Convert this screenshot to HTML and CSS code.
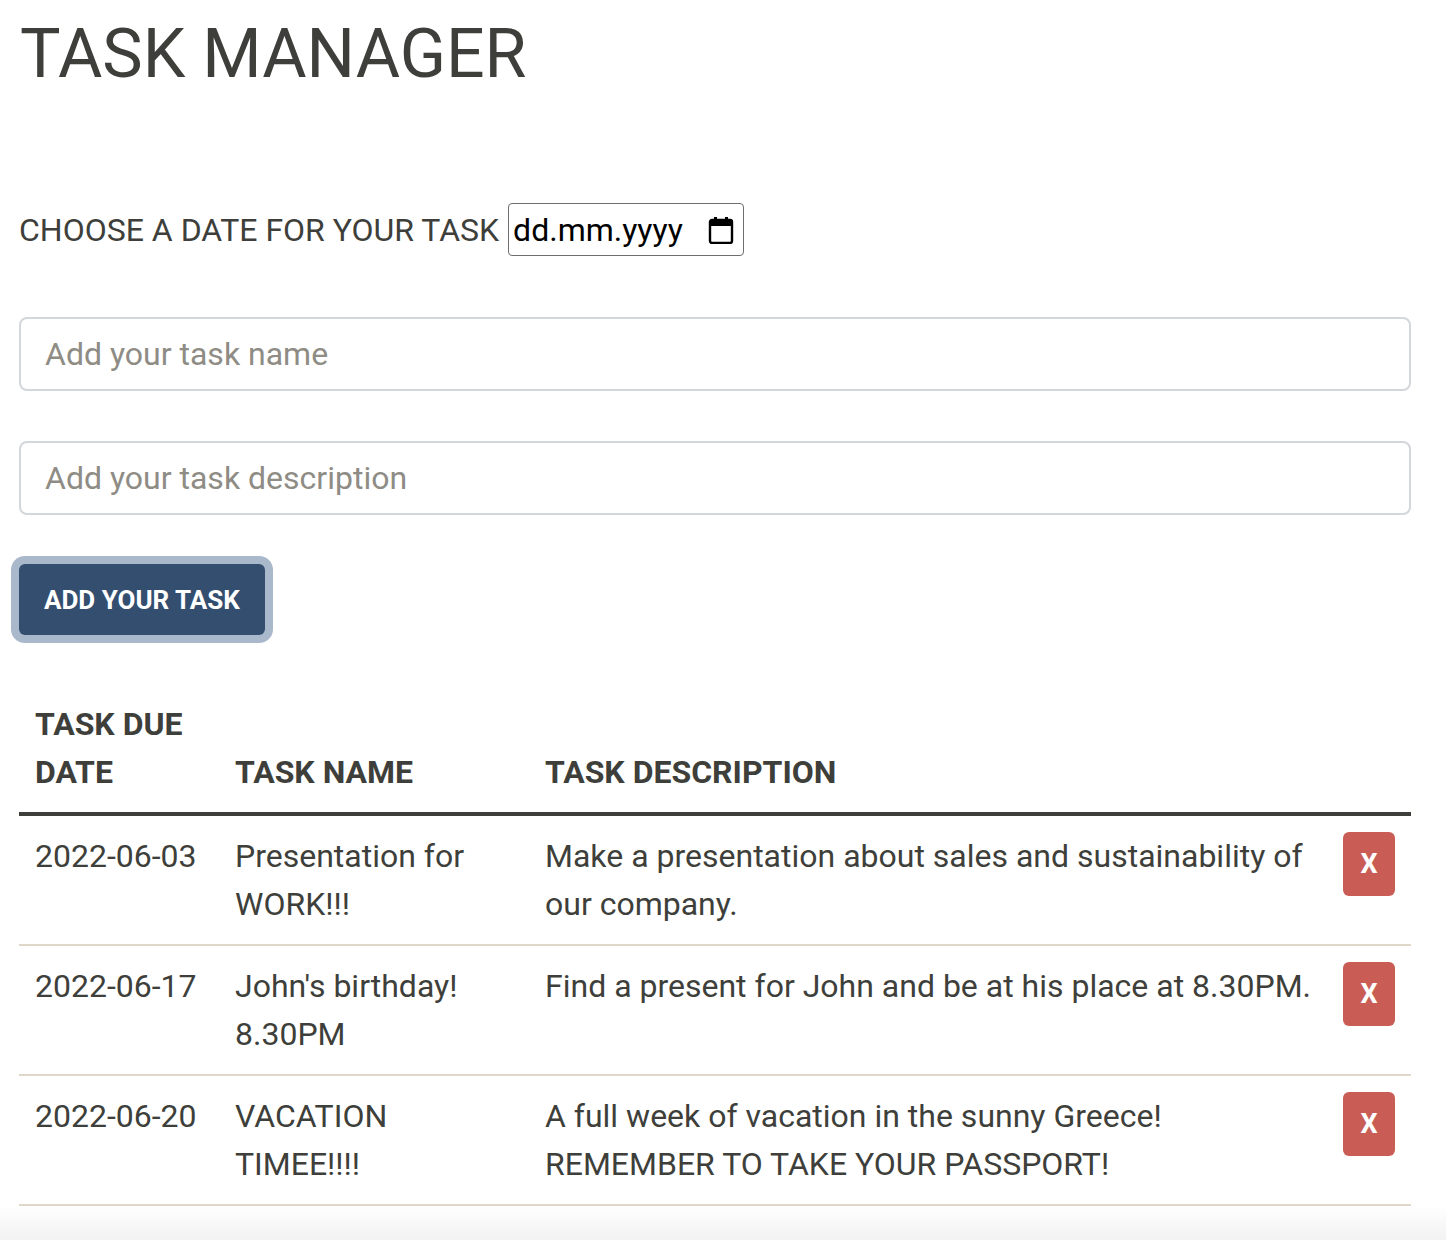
FILE: index.html
```html
<!DOCTYPE html>
<html lang="en">
<head>
<meta charset="utf-8">
<title>Task Manager</title>
<link rel="stylesheet" href="styles.css">
</head>
<body>
<main class="container">
  <h1 class="title">TASK MANAGER</h1>

  <div class="date-row">
    <label class="date-label" for="due">CHOOSE A DATE FOR YOUR TASK</label>
    <div class="date-input" id="due">
      <span class="date-text">dd.mm.yyyy</span>
      <svg class="cal-icon" width="26" height="28" viewBox="0 0 26 28" aria-hidden="true">
        <rect x="6" y="1" width="3" height="5" fill="#000"/>
        <rect x="17" y="1" width="3" height="5" fill="#000"/>
        <rect x="2" y="4" width="22" height="23" rx="2" ry="2" fill="none" stroke="#000" stroke-width="2.4"/>
        <rect x="2" y="4" width="22" height="6" fill="#000"/>
      </svg>
    </div>
  </div>

  <input class="form-control" type="text" placeholder="Add your task name">
  <input class="form-control" type="text" placeholder="Add your task description">

  <button class="btn-primary" type="button">ADD YOUR TASK</button>

  <table class="task-table">
    <colgroup>
      <col class="c-date">
      <col class="c-name">
      <col class="c-desc">
      <col class="c-act">
    </colgroup>
    <thead>
      <tr>
        <th>TASK DUE DATE</th>
        <th>TASK NAME</th>
        <th>TASK DESCRIPTION</th>
        <th></th>
      </tr>
    </thead>
    <tbody>
      <tr>
        <td>2022-06-03</td>
        <td>Presentation for WORK!!!</td>
        <td class="desc">Make a presentation about sales and sustainability of our company.</td>
        <td><button class="btn-danger" type="button">X</button></td>
      </tr>
      <tr>
        <td>2022-06-17</td>
        <td>John's birthday! 8.30PM</td>
        <td class="desc">Find a present for John and be at his place at 8.30PM.</td>
        <td><button class="btn-danger" type="button">X</button></td>
      </tr>
      <tr>
        <td>2022-06-20</td>
        <td>VACATION TIMEE!!!!</td>
        <td class="desc">A full week of vacation in the sunny Greece! REMEMBER TO TAKE YOUR PASSPORT!</td>
        <td><button class="btn-danger" type="button">X</button></td>
      </tr>
    </tbody>
  </table>
</main>
<div class="bottom-shade"></div>
</body>
</html>
```

FILE: styles.css
```css
html, body {
  margin: 0;
  padding: 0;
  background: #ffffff;
}

body {
  font-family: Roboto, "Liberation Sans", Arial, sans-serif;
  color: #3e3f3a;
  font-size: 32px;
  line-height: 48px;
}

.container {
  width: 1392px;
  padding: 13px 0 0 19px;
  display: flex;
  flex-direction: column;
  align-items: flex-start;
}

.title {
  margin: 0 0 0 1px;
  font-size: 68px;
  font-weight: 400;
  line-height: 82px;
  color: #3e3f3a;
}

.date-row {
  margin-top: 108px;
  display: flex;
  align-items: center;
  gap: 9px;
}

.date-label {
  font-size: 32px;
  line-height: 40px;
  color: #3e3f3a;
}

.date-input {
  box-sizing: border-box;
  width: 236px;
  height: 53px;
  border: 1.5px solid #6f6f6f;
  border-radius: 4px;
  display: flex;
  align-items: center;
  justify-content: space-between;
  padding: 0 9px 0 4px;
  color: #000;
}

.date-text {
  font-size: 32px;
  line-height: 36px;
  color: #000;
}

.cal-icon {
  display: block;
}

.form-control {
  box-sizing: border-box;
  width: 1392px;
  height: 74px;
  border: 2px solid #d3d6da;
  border-radius: 8px;
  padding: 12px 24px;
  font-family: inherit;
  font-size: 32px;
  line-height: 46px;
  color: #3e3f3a;
  background: #fff;
  outline: none;
  margin-top: 61px;
}

.form-control + .form-control {
  margin-top: 50px;
}

.form-control::placeholder {
  color: #8e8c84;
  opacity: 1;
}

.btn-primary {
  margin-top: 49px;
  height: 71px;
  padding: 0 25px;
  border: none;
  border-radius: 6px;
  background: #344e6f;
  color: #fff;
  font-family: inherit;
  font-size: 26px;
  font-weight: 700;
  box-shadow: 0 0 0 8px #a9b8cb;
}

.task-table {
  margin-top: 49px;
  width: 1392px;
  border-collapse: collapse;
  table-layout: fixed;
}

.c-date { width: 200px; }
.c-name { width: 310px; }
.c-act { width: 84px; }

.task-table th {
  text-align: left;
  vertical-align: bottom;
  font-weight: 700;
  font-size: 32px;
  line-height: 48px;
  padding: 16px;
  border-bottom: 4px solid #3e3f3a;
}

.task-table td {
  vertical-align: top;
  padding: 16px;
  line-height: 48px;
  border-bottom: 2px solid #dfd7ca;
}

.task-table td.desc {
  padding-right: 10px;
}

.btn-danger {
  display: block;
  width: 52px;
  height: 64px;
  padding: 0;
  border: none;
  border-radius: 6px;
  background: #c95d56;
  color: #fff;
  font-family: inherit;
  font-size: 27px;
  font-weight: 700;
}

.bottom-shade {
  position: fixed;
  left: 0;
  right: 0;
  bottom: 0;
  height: 34px;
  background: linear-gradient(to bottom, rgba(0, 0, 0, 0), rgba(0, 0, 0, 0.05));
  pointer-events: none;
}
```
